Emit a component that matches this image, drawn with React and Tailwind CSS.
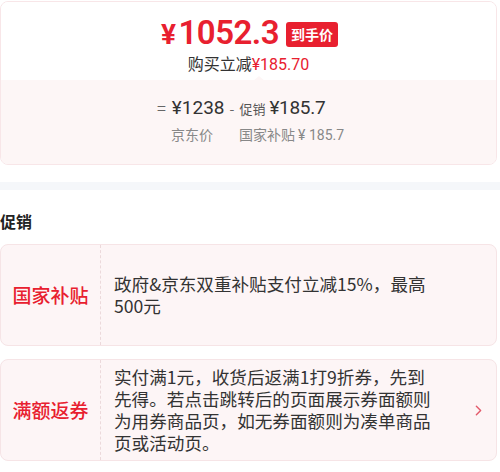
import { ChevronRight } from 'lucide-react';

const font = { fontFamily: '"Noto Sans CJK SC", "Noto Sans", sans-serif' };

const promos = [
  {
    label: '国家补贴',
    text: '政府&京东双重补贴支付立减15%，最高500元',
    arrow: false,
  },
  {
    label: '满额返券',
    text: '实付满1元，收货后返满1打9折券，先到先得。若点击跳转后的页面展示券面额则为用券商品页，如无券面额则为凑单商品页或活动页。',
    arrow: true,
  },
];

function PriceCard() {
  return (
    <div className="mr-[3px] mt-[1px] rounded-lg border border-[#f8e6e8] overflow-hidden">
      <div className="flex flex-col items-center bg-white pt-[10px] pb-[4px] relative">
        <div className="flex items-center gap-[7px] text-[#e8202f] translate-x-[1px]">
          <span className="font-['Roboto'] text-[33px] leading-[42px] font-semibold tracking-[-0.5px]">
            <span className="text-[28px] leading-none font-bold mr-[3px]">¥</span>1052.3
          </span>
          <span className="bg-[#e8202f] text-white text-[14px] font-bold leading-[25px] px-[5px] rounded-[3px] mt-[2px]">
            到手价
          </span>
        </div>
        <div className="text-[16px] leading-[22px] text-[#333] -mt-[2px]">
          购买立减<span className="text-[#e8202f] font-['Roboto']">¥185.70</span>
        </div>
        <div className="absolute bottom-[-1px] left-1/2 w-0 h-0 border-x-[6px] border-x-transparent border-b-[5px] border-b-[#fdf6f6] translate-x-[4px]" />
      </div>
      <div className="bg-[#fdf6f6] flex justify-center pt-[15px] pb-[19px]">
        <div className="flex flex-col translate-x-[2px]">
          <div className="flex items-baseline text-[#333]">
            <span className="text-[#666] text-[16px] mr-[6px]">=</span>
            <span className="font-['Roboto'] text-[19px] leading-[26px] text-[#333]">¥1238</span>
            <span className="text-[#666] text-[14px] mx-[5px]">-</span>
            <span className="text-[13px] text-[#555] mr-[4px]">促销</span>
            <span className="font-['Roboto'] text-[19px] leading-[26px] tracking-[-0.3px] text-[#333]">¥185.7</span>
          </div>
          <div className="flex text-[14px] text-[#888] leading-[20px] mt-[3px] pl-[14px]">
            <span className="w-[68px]">京东价</span>
            <span>国家补贴 <span className="font-['Roboto']">¥ 185.7</span></span>
          </div>
        </div>
      </div>
    </div>
  );
}

function PromoCard({ label, text, arrow }) {
  return (
    <div className="flex items-stretch min-h-[102px] rounded-lg border border-[#f6e4e6] bg-[#fdf5f6] mr-[3px]">
      <div className="w-[100px] shrink-0 flex items-center justify-center border-r border-dashed border-[#ecd9db]">
        <span className="text-[#e8202f] text-[19px] font-medium">{label}</span>
      </div>
      <div className="flex-1 flex items-center py-[5px] pl-[13px] pr-[9px]">
        <p className="w-[320px] text-[17.6px] leading-[22px] text-[#333]">{text}</p>
        <div className="flex-1 flex justify-end">
          {arrow && <ChevronRight className="w-[17px] h-[17px] text-[#e35a6b]" strokeWidth={2} />}
        </div>
      </div>
    </div>
  );
}

export default function App() {
  return (
    <div className="w-[500px] h-[472px] overflow-hidden bg-white" style={font}>
      <PriceCard />
      <div className="h-[8px] bg-[#f5f7fa] mt-[17px]" />
      <div className="pt-[20px] pb-[12px] text-[16px] font-bold text-[#222] leading-[22px]">促销</div>
      <div className="flex flex-col gap-[13px]">
        {promos.map((p) => (
          <PromoCard key={p.label} {...p} />
        ))}
      </div>
    </div>
  );
}
